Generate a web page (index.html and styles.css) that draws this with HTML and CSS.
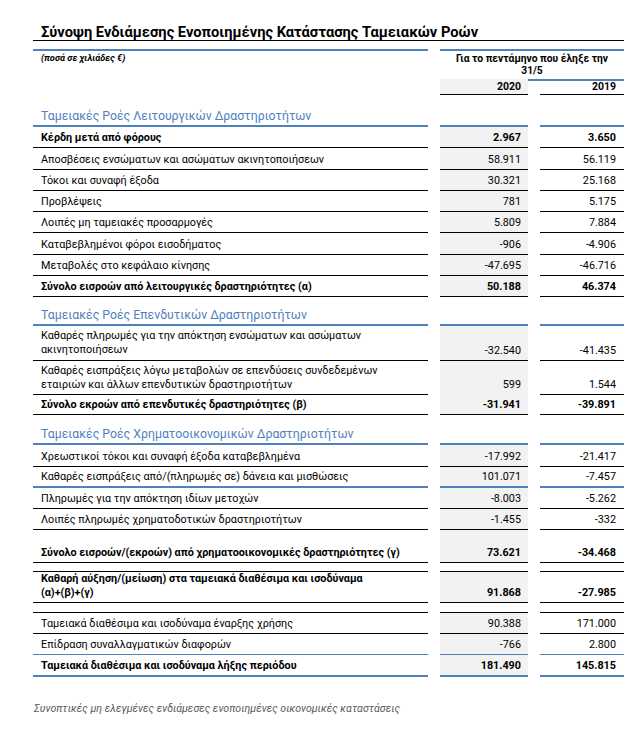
FILE: index.html
```html
<!DOCTYPE html>
<html lang="el">
<head>
<meta charset="utf-8">
<title>Σύνοψη Ενδιάμεσης Ενοποιημένης Κατάστασης Ταμειακών Ροών</title>
<link rel="stylesheet" href="styles.css">
</head>
<body>
<div class="sheet">
  <div class="title">Σύνοψη Ενδιάμεσης Ενοποιημένης Κατάστασης Ταμειακών Ροών</div>

  <div class="row r-gap">
    <div class="c lbl b-blue"></div>
    <div class="c span b-blue"></div>
  </div>
  <div class="row r-head">
    <div class="c lbl units">(ποσά σε χιλιάδες €)</div>
    <div class="c span period b-blue">Για το πεντάμηνο που έληξε την<br>31/5</div>
  </div>
  <div class="row r-year">
    <div class="c lbl"></div>
    <div class="c v1 num bold b-black">2020</div>
    <div class="c v2 num bold b-black">2019</div>
  </div>

  <div class="row r-sec r-sec1">
    <div class="c lbl sec b-blue">Ταμειακές Ροές Λειτουργικών Δραστηριοτήτων</div>
    <div class="c b-blue"></div>
    <div class="c b-blue"></div>
  </div>
  <div class="row r-d bold">
    <div class="c lbl b-black">Κέρδη μετά από φόρους</div>
    <div class="c v1 num b-black">2.967</div>
    <div class="c v2 num b-black">3.650</div>
  </div>
  <div class="row r-d r-tall">
    <div class="c lbl b-black">Αποσβέσεις ενσώματων και ασώματων ακινητοποιήσεων</div>
    <div class="c v1 num b-black">58.911</div>
    <div class="c v2 num b-black">56.119</div>
  </div>
  <div class="row r-d">
    <div class="c lbl b-black">Τόκοι και συναφή έξοδα</div>
    <div class="c v1 num b-black">30.321</div>
    <div class="c v2 num b-black">25.168</div>
  </div>
  <div class="row r-d">
    <div class="c lbl b-black">Προβλέψεις</div>
    <div class="c v1 num b-black">781</div>
    <div class="c v2 num b-black">5.175</div>
  </div>
  <div class="row r-d">
    <div class="c lbl b-black">Λοιπές μη ταμειακές προσαρμογές</div>
    <div class="c v1 num b-black">5.809</div>
    <div class="c v2 num b-black">7.884</div>
  </div>
  <div class="row r-d r-tall">
    <div class="c lbl b-black">Καταβεβλημένοι φόροι εισοδήματος</div>
    <div class="c v1 num b-black">-906</div>
    <div class="c v2 num b-black">-4.906</div>
  </div>
  <div class="row r-d">
    <div class="c lbl b-black">Μεταβολές στο κεφάλαιο κίνησης</div>
    <div class="c v1 num b-black">-47.695</div>
    <div class="c v2 num b-black">-46.716</div>
  </div>
  <div class="row r-d bold">
    <div class="c lbl b-black">Σύνολο εισροών από λειτουργικές δραστηριότητες (α)</div>
    <div class="c v1 num b-black">50.188</div>
    <div class="c v2 num b-black">46.374</div>
  </div>

  <div class="row r-sec r-sec2">
    <div class="c lbl sec b-blue">Ταμειακές Ροές Επενδυτικών Δραστηριοτήτων</div>
    <div class="c b-blue"></div>
    <div class="c b-blue"></div>
  </div>
  <div class="row r-d r-two">
    <div class="c lbl b-black">Καθαρές πληρωμές για την απόκτηση ενσώματων και ασώματων<br>ακινητοποιήσεων</div>
    <div class="c v1 num b-black">-32.540</div>
    <div class="c v2 num b-black">-41.435</div>
  </div>
  <div class="row r-d r-two2">
    <div class="c lbl b-black">Καθαρές εισπράξεις λόγω μεταβολών σε επενδύσεις συνδεδεμένων<br>εταιριών και άλλων επενδυτικών δραστηριοτήτων</div>
    <div class="c v1 num b-black">599</div>
    <div class="c v2 num b-black">1.544</div>
  </div>
  <div class="row r-d bold">
    <div class="c lbl b-black">Σύνολο εκροών από επενδυτικές δραστηριότητες (β)</div>
    <div class="c v1 num b-black">-31.941</div>
    <div class="c v2 num b-black">-39.891</div>
  </div>

  <div class="row r-sec r-sec3">
    <div class="c lbl sec b-blue">Ταμειακές Ροές Χρηματοοικονομικών Δραστηριοτήτων</div>
    <div class="c b-blue"></div>
    <div class="c b-blue"></div>
  </div>
  <div class="row r-d r-tall">
    <div class="c lbl b-black">Χρεωστικοί τόκοι και συναφή έξοδα καταβεβλημένα</div>
    <div class="c v1 num b-black">-17.992</div>
    <div class="c v2 num b-black">-21.417</div>
  </div>
  <div class="row r-d">
    <div class="c lbl b-blue">Καθαρές εισπράξεις από/(πληρωμές σε) δάνεια και μισθώσεις</div>
    <div class="c v1 num b-blue">101.071</div>
    <div class="c v2 num b-blue">-7.457</div>
  </div>
  <div class="row r-d">
    <div class="c lbl b-black">Πληρωμές για την απόκτηση ιδίων μετοχών</div>
    <div class="c v1 num b-black">-8.003</div>
    <div class="c v2 num b-black">-5.262</div>
  </div>
  <div class="row r-d">
    <div class="c lbl b-black">Λοιπές πληρωμές χρηματοδοτικών δραστηριοτήτων</div>
    <div class="c v1 num b-black">-1.455</div>
    <div class="c v2 num b-black">-332</div>
  </div>
  <div class="row r-d r-total-g bold">
    <div class="c lbl b-black">Σύνολο εισροών/(εκροών) από χρηματοοικονομικές δραστηριότητες (γ)</div>
    <div class="c v1 num b-black">73.621</div>
    <div class="c v2 num b-black">-34.468</div>
  </div>
  <div class="row r-spacer r-spacer-a">
    <div class="c b-black"></div>
    <div class="c b-black"></div>
    <div class="c b-black"></div>
  </div>
  <div class="row r-d r-net bold">
    <div class="c lbl b-black">Καθαρή αύξηση/(μείωση) στα ταμειακά διαθέσιμα και ισοδύναμα<br>(α)+(β)+(γ)</div>
    <div class="c v1 num b-black">91.868</div>
    <div class="c v2 num b-black">-27.985</div>
  </div>
  <div class="row r-spacer">
    <div class="c b-black"></div>
    <div class="c b-black"></div>
    <div class="c b-black"></div>
  </div>
  <div class="row r-d">
    <div class="c lbl b-black">Ταμειακά διαθέσιμα και ισοδύναμα έναρξης χρήσης</div>
    <div class="c v1 num b-black">90.388</div>
    <div class="c v2 num b-black">171.000</div>
  </div>
  <div class="row r-d">
    <div class="c lbl b-blue-thin">Επίδραση συναλλαγματικών διαφορών</div>
    <div class="c v1 num b-blue-thin">-766</div>
    <div class="c v2 num b-blue-thin">2.800</div>
  </div>
  <div class="row r-d r-tall bold">
    <div class="c lbl b-blue">Ταμειακά διαθέσιμα και ισοδύναμα λήξης περιόδου</div>
    <div class="c v1 num b-blue">181.490</div>
    <div class="c v2 num b-blue">145.815</div>
  </div>

  <div class="footer">Συνοπτικές μη ελεγμένες ενδιάμεσες ενοποιημένες οικονομικές καταστάσεις</div>
</div>
</body>
</html>
```

FILE: styles.css
```css
html, body {
  margin: 0;
  padding: 0;
  background: #ffffff;
}

body {
  font-family: Roboto, "Noto Sans", "DejaVu Sans", sans-serif;
  font-size: 10.8px;
  color: #000000;
}

.sheet {
  width: 591px;
  margin-left: 33px;
  padding-top: 21px;
}

.title {
  font-size: 14.7px;
  font-weight: 700;
  padding-left: 8px;
  height: 19px;
  line-height: 22px;
  border-bottom: 1px solid #000;
}

.row {
  display: grid;
  grid-template-columns: 395px 88px 84px;
  column-gap: 12px;
}

.c {
  box-sizing: border-box;
  display: flex;
  align-items: flex-end;
  padding-bottom: 2px;
  line-height: 14px;
}

.lbl {
  padding-left: 8px;
}

.num {
  justify-content: flex-end;
  padding-right: 7px;
}

.v2.num {
  padding-right: 8px;
}

.span {
  grid-column: 2 / span 2;
}

.bold {
  font-weight: 700;
}

.b-black {
  border-bottom: 1px solid #000;
}

.b-blue {
  border-bottom: 2px solid #4f81bd;
}

.b-blue-thin {
  border-bottom: 1px solid #4f81bd;
}

.r-gap {
  height: 10px;
}

.r-head {
  height: 28px;
}

.units {
  align-items: flex-start;
  font-size: 9.2px;
  font-weight: 700;
  font-style: italic;
  padding-top: 2px;
  line-height: 10px;
}

.period {
  display: block;
  text-align: center;
  font-size: 10.3px;
  font-weight: 700;
  line-height: 12px;
  padding-top: 2px;
}

.r-year {
  height: 16px;
}

.r-year .c {
  font-size: 10.5px;
  line-height: 12px;
  padding-bottom: 1px;
}

.v1 {
  background: #f2f2f2;
}

.sec {
  color: #4f81bd;
  font-size: 12.3px;
  line-height: 16px;
  padding-bottom: 1px;
}

.r-sec1 { height: 32px; }
.r-sec2 { height: 29px; }
.r-sec3 { height: 30px; }

.r-d {
  height: 21px;
}

.r-tall {
  height: 22px;
}

.r-two {
  height: 35px;
}

.r-two2 {
  height: 33px;
}

.r-total-g {
  height: 33px;
}

.r-two .lbl,
.r-two2 .lbl {
  align-items: flex-start;
  padding-top: 3px;
  line-height: 14px;
}

.r-spacer {
  height: 10px;
}

.r-spacer-a {
  height: 9px;
}

.r-spacer .c {
  padding: 0;
}

.r-net {
  height: 31px;
}

.r-net .lbl {
  line-height: 14px;
}

.footer {
  margin-top: 25px;
  padding-left: 1px;
  font-size: 10.6px;
  font-style: italic;
  color: #595959;
}
```
